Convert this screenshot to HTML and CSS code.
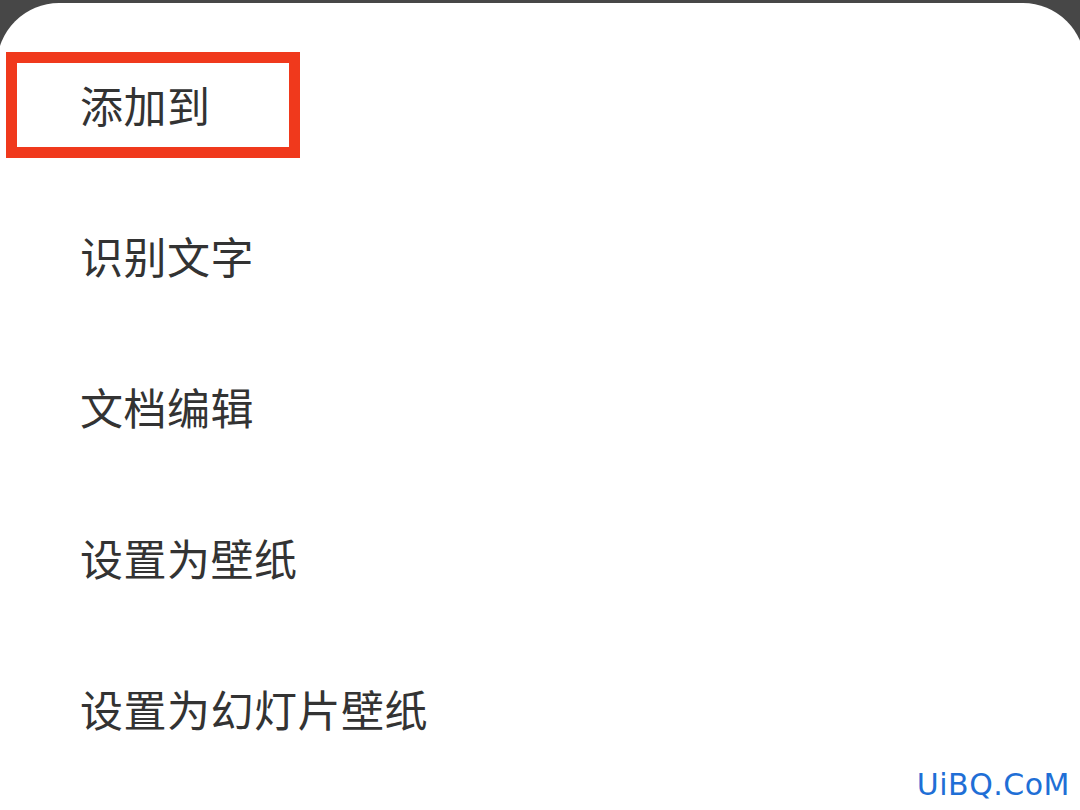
FILE: index.html
```html
<!DOCTYPE html>
<html lang="zh-CN">
<head>
    <meta charset="UTF-8">
    <meta name="viewport" content="width=device-width, initial-scale=1.0">
    <title>图片操作菜单</title>
    <link rel="stylesheet" href="styles.css">
</head>
<body>
    <div class="sheet">
        <ul class="menu">
            <li class="menu-item">添加到</li>
            <li class="menu-item">识别文字</li>
            <li class="menu-item">文档编辑</li>
            <li class="menu-item">设置为壁纸</li>
            <li class="menu-item">设置为幻灯片壁纸</li>
        </ul>
        <!-- highlight frame over the first item -->
        <div class="highlight"></div>
    </div>
    <div class="watermark">UiBQ.CoM</div>
</body>
</html>
```

FILE: styles.css
```css
html, body {
    margin: 0;
    height: 100%;
}
body {
    background: #474747;
    overflow: hidden;
    position: relative;
    font-family: "Noto Sans CJK SC", "Noto Sans", sans-serif;
}
.sheet {
    position: relative;
    margin: 3px 0 0 -3px;
    width: calc(100% + 8px);
    height: 807px;
    background: #fff;
    border-radius: 62px 62px 0 0;
    padding-top: 25px;
    box-sizing: border-box;
}
.menu {
    list-style: none;
    margin: 0;
    padding: 0;
}
.menu-item {
    height: 151px;
    display: flex;
    align-items: center;
    padding-left: 83px;
    font-size: 43px;
    color: #333;
    letter-spacing: 0.5px;
}
.highlight {
    position: absolute;
    left: 9px;
    top: 49px;
    width: 294px;
    height: 106px;
    border: 11px solid #f0391c;
    box-sizing: border-box;
}
.watermark {
    position: absolute;
    right: 10px;
    bottom: 8px;
    font-family: "DejaVu Sans", sans-serif;
    font-size: 30px;
    color: #1f6fd6;
    letter-spacing: 0.5px;
}
```
